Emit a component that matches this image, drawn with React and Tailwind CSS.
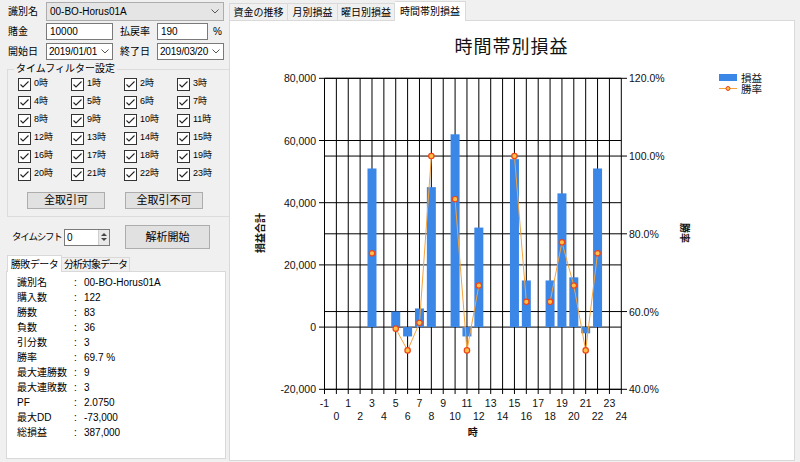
import React from "react";

const BLUE = "#3a87e8";

const bars = [
  { h: 3, v: 51000, p: 75 },
  { h: 5, v: 5000, p: 55.6 },
  { h: 6, v: -3000, p: 50 },
  { h: 7, v: 6000, p: 57.1 },
  { h: 8, v: 45000, p: 100 },
  { h: 10, v: 62000, p: 88.9 },
  { h: 11, v: -3000, p: 50 },
  { h: 12, v: 32000, p: 66.7 },
  { h: 15, v: 54000, p: 100 },
  { h: 16, v: 15000, p: 62.5 },
  { h: 18, v: 15000, p: 62.5 },
  { h: 19, v: 43000, p: 77.8 },
  { h: 20, v: 16000, p: 66.7 },
  { h: 21, v: -2000, p: 50 },
  { h: 22, v: 51000, p: 75 },
];

const stats = [
  ["識別名", "00-BO-Horus01A"],
  ["購入数", "122"],
  ["勝数", "83"],
  ["負数", "36"],
  ["引分数", "3"],
  ["勝率", "69.7 %"],
  ["最大連勝数", "9"],
  ["最大連敗数", "3"],
  ["PF", "2.0750"],
  ["最大DD", "-73,000"],
  ["総損益", "387,000"],
];

const X = (h) => 324.5 + (h + 1) * 11.872;
const YV = (v) => 327.1 - v * 0.00311;
const YP = (p) => 389.3 - (p - 40) * 3.8875;

function Chevron() {
  return (
    <svg width="8" height="5" viewBox="0 0 8 5">
      <path d="M0.5 0.5 L4 4 L7.5 0.5" fill="none" stroke="#555" strokeWidth="1" />
    </svg>
  );
}

function Check({ label }) {
  return (
    <div className="w-[53px] flex items-center gap-[3px]">
      <div className="w-[13px] h-[13px] bg-white border border-[#333] flex items-center justify-center">
        <svg width="11" height="11" viewBox="0 0 11 11">
          <path d="M1.5 5.5 L4 8 L9.5 2.5" fill="none" stroke="#222" strokeWidth="1.1" />
        </svg>
      </div>
      <span className="text-[9px]">{label}</span>
    </div>
  );
}

function Chart() {
  const vals = [80000, 60000, 40000, 20000, 0, -20000];
  const pcts = [120, 100, 80, 60, 40];
  const hours = [];
  for (let h = -1; h <= 24; h++) hours.push(h);
  // line breaks where an hour has no trades
  const groups = [[3], [5, 6, 7, 8], [10, 11, 12], [15, 16], [18, 19, 20, 21, 22]];
  const byH = (h) => bars.find((b) => b.h === h);

  return (
    <svg
      width="564"
      height="439"
      viewBox="230 21 564 439"
      style={{ fontFamily: '"Liberation Sans", "Noto Sans CJK JP", sans-serif' }}
    >
      <text x="511.5" y="53" fontSize="18" textAnchor="middle" fill="#111" letterSpacing="1">
        時間帯別損益
      </text>

      {hours.map((h) => (
        <line key={"v" + h} x1={X(h)} y1="78.3" x2={X(h)} y2="394" stroke="#000" strokeWidth="1" />
      ))}
      {vals.map((v) => (
        <line key={"hv" + v} x1="319" y1={YV(v)} x2={X(24)} y2={YV(v)} stroke="#000" strokeWidth="1" />
      ))}
      {pcts.map((p) => (
        <line key={"hp" + p} x1={X(-1)} y1={YP(p)} x2="627" y2={YP(p)} stroke="#000" strokeWidth="1" />
      ))}

      {bars.map((b) => (
        <rect
          key={"b" + b.h}
          x={X(b.h) - 4.5}
          y={Math.min(YV(b.v), YV(0))}
          width="9"
          height={Math.abs(YV(b.v) - YV(0))}
          fill={BLUE}
        />
      ))}

      {groups.map((g, i) => (
        <polyline
          key={"g" + i}
          points={g.map((h) => `${X(h)},${YP(byH(h).p)}`).join(" ")}
          fill="none"
          stroke="#f5a43c"
          strokeWidth="1"
        />
      ))}
      {bars.map((b) => (
        <circle key={"c" + b.h} cx={X(b.h)} cy={YP(b.p)} r="2.7" fill="#ffc04a" stroke="#ee4418" strokeWidth="1.2" />
      ))}

      {vals.map((v) => (
        <text key={"lv" + v} x="316" y={YV(v) + 4} fontSize="10.5" textAnchor="end" fill="#111">
          {v.toLocaleString("en-US")}
        </text>
      ))}
      {pcts.map((p) => (
        <text key={"lp" + p} x="629" y={YP(p) + 4} fontSize="10.5" fill="#111">
          {p.toFixed(1)}%
        </text>
      ))}
      {hours.map((h) => (
        <text
          key={"lx" + h}
          x={X(h)}
          y={(h + 1) % 2 === 0 ? 407 : 420}
          fontSize="10.5"
          textAnchor="middle"
          fill="#111"
        >
          {h}
        </text>
      ))}

      <text x="472.7" y="436" fontSize="10" fontWeight="bold" textAnchor="middle" fill="#111">
        時
      </text>
      <text
        x="260"
        y="233"
        fontSize="10"
        fontWeight="bold"
        textAnchor="middle"
        dominantBaseline="central"
        transform="rotate(-90 260 233)"
        fill="#111"
      >
        損益合計
      </text>
      <text
        x="684"
        y="233"
        fontSize="10"
        fontWeight="bold"
        textAnchor="middle"
        dominantBaseline="central"
        transform="rotate(90 684 233)"
        fill="#111"
      >
        勝率
      </text>

      <rect x="719" y="74" width="18" height="7" fill={BLUE} />
      <text x="741" y="81.5" fontSize="10.5" fill="#111">損益</text>
      <line x1="719" y1="88.5" x2="737" y2="88.5" stroke="#f5a43c" strokeWidth="1" />
      <circle cx="728" cy="88.5" r="2" fill="#ffc04a" stroke="#ee4418" strokeWidth="1" />
      <text x="741" y="92.5" fontSize="10.5" fill="#111">勝率</text>
    </svg>
  );
}

export default function App() {
  const rows = [];
  for (let r = 0; r < 6; r++) {
    rows.push([0, 1, 2, 3].map((c) => `${r * 4 + c}時`));
  }

  return (
    <div className="w-[800px] h-[462px] bg-[#f0f0f0] flex overflow-hidden text-black text-[10px] whitespace-nowrap font-['Liberation_Sans','Noto_Sans_CJK_JP',sans-serif]">
      {/* left side */}
      <div className="w-[229px] shrink-0 flex flex-col">
        <div className="flex items-center h-[19px] mt-[2px] pl-[8px]">
          <span className="w-[38px]">識別名</span>
          <div className="w-[178px] h-[19px] bg-[#e5e5e5] border border-[#adadad] flex items-center justify-between pl-[3px] pr-[4px]">
            <span>00-BO-Horus01A</span>
            <Chevron />
          </div>
        </div>

        <div className="flex items-center h-[17px] mt-[2px] pl-[8px]">
          <span className="w-[38px]">賭金</span>
          <div className="w-[67px] h-[17px] bg-white border border-[#7a7a7a] flex items-center pl-[3px]">10000</div>
          <span className="w-[37px] ml-[7px]">払戻率</span>
          <div className="w-[51px] h-[17px] bg-white border border-[#7a7a7a] flex items-center pl-[3px]">190</div>
          <span className="ml-[5px]">%</span>
        </div>

        <div className="flex items-center h-[17px] mt-[3px] pl-[8px]">
          <span className="w-[38px]">開始日</span>
          <div className="w-[67px] h-[17px] bg-white border border-[#7a7a7a] flex items-center justify-between pl-[2px] pr-[3px] tracking-[-0.2px]">
            <span>2019/01/01</span>
            <Chevron />
          </div>
          <span className="w-[37px] ml-[7px]">終了日</span>
          <div className="w-[67px] h-[17px] bg-white border border-[#7a7a7a] flex items-center justify-between pl-[2px] pr-[3px] tracking-[-0.2px]">
            <span>2019/03/20</span>
            <Chevron />
          </div>
        </div>

        <fieldset className="ml-[7px] w-[217px] mt-[3px] border border-[#dcdcdc] pl-[10px] pb-[7px]">
          <legend className="ml-[-4px] px-[2px] leading-[12px]">タイムフィルター設定</legend>
          {rows.map((row, i) => (
            <div key={i} className="flex items-center h-[18px]">
              {row.map((l) => (
                <Check key={l} label={l} />
              ))}
            </div>
          ))}
          <div className="flex mt-[9px] ml-[9px] gap-[20px]">
            <div className="w-[78px] h-[17px] bg-[#e1e1e1] border border-[#adadad] flex items-center justify-center text-[11px]">
              全取引可
            </div>
            <div className="w-[78px] h-[17px] bg-[#e1e1e1] border border-[#adadad] flex items-center justify-center text-[11px]">
              全取引不可
            </div>
          </div>
        </fieldset>

        <div className="flex items-center h-[24px] mt-[8px] pl-[12px]">
          <span className="w-[52px] text-[9.5px] tracking-[-1.2px]">タイムシフト</span>
          <div className="w-[46px] h-[17px] bg-white border border-[#7a7a7a] flex items-center justify-between pl-[2px]">
            <span>0</span>
            <div className="w-[11px] h-[15px] bg-[#e8e8e8] border-l border-[#cfcfcf] flex flex-col items-center justify-center gap-[2px]">
              <div className="w-0 h-0 border-x-[3px] border-x-transparent border-b-[3px] border-b-[#444]" />
              <div className="w-0 h-0 border-x-[3px] border-x-transparent border-t-[3px] border-t-[#444]" />
            </div>
          </div>
          <div className="ml-[15px] w-[85px] h-[24px] bg-[#e1e1e1] border border-[#adadad] flex items-center justify-center text-[11px]">
            解析開始
          </div>
        </div>

        <div className="flex items-end h-[16px] mt-[6px] pl-[7px]">
          <div className="h-[17px] w-[55px] bg-white border border-b-0 border-[#d9d9d9] flex items-center justify-center relative z-10 mb-[-1px] tracking-[-0.5px]">
            勝敗データ
          </div>
          <div className="h-[14px] w-[68px] border border-b-0 border-l-0 border-[#d9d9d9] flex items-center justify-center tracking-[-1px]">
            分析対象データ
          </div>
        </div>
        <div className="ml-[6px] w-[220px] h-[188px] bg-white border border-[#d9d9d9] pt-[3px]">
          {stats.map(([k, v]) => (
            <div key={k} className="flex items-center h-[15px] pl-[10px]">
              <span className="w-[57px]">{k}</span>
              <span className="w-[10px]">:</span>
              <span>{v}</span>
            </div>
          ))}
        </div>
      </div>

      {/* right side */}
      <div className="w-[566px] shrink-0 flex flex-col">
        <div className="flex items-end h-[20px]">
          <div className="h-[17px] w-[59px] border border-b-0 border-[#d9d9d9] flex items-center justify-center">資金の推移</div>
          <div className="h-[17px] w-[50px] border border-b-0 border-l-0 border-[#d9d9d9] flex items-center justify-center">月別損益</div>
          <div className="h-[17px] w-[57px] border border-b-0 border-l-0 border-[#d9d9d9] flex items-center justify-center">曜日別損益</div>
          <div className="h-[20px] w-[71px] bg-white border border-b-0 border-l-0 border-[#d9d9d9] flex items-center justify-center mb-[-1px] relative z-10">
            時間帯別損益
          </div>
        </div>
        <div className="w-[566px] h-[441px] bg-white border border-[#d9d9d9]">
          <Chart />
        </div>
      </div>
    </div>
  );
}
